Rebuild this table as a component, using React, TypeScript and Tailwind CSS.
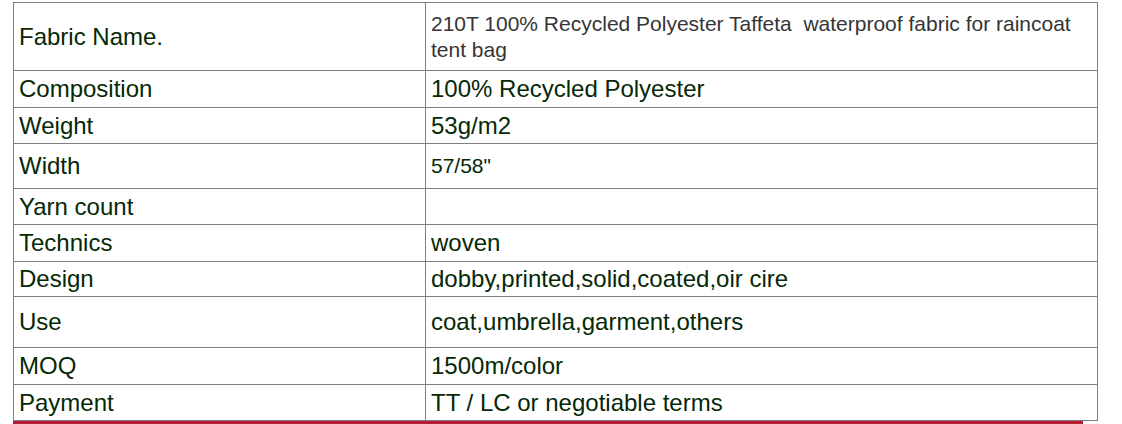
const rows: { label: string; value: React.ReactNode; h: string; small?: boolean }[] = [
  { label: "Composition", value: "100% Recycled Polyester", h: "h-[37px]" },
  { label: "Weight", value: "53g/m2", h: "h-[36px]" },
  { label: "Width", value: '57/58"', h: "h-[45px]", small: true },
  { label: "Yarn count", value: "", h: "h-[36px]" },
  { label: "Technics", value: "woven", h: "h-[37px]" },
  { label: "Design", value: "dobby,printed,solid,coated,oir cire", h: "h-[35px]" },
  { label: "Use", value: "coat,umbrella,garment,others", h: "h-[51px]" },
  { label: "MOQ", value: "1500m/color", h: "h-[37px]" },
  { label: "Payment", value: "TT / LC or negotiable terms", h: "h-[36px]" },
];

export default function App() {
  return (
    <div className="w-[1122px] h-[424px] bg-white overflow-hidden pt-[2px] pl-[13px] font-['Liberation_Sans',Arial,sans-serif] text-[#062806]">
      <table className="border-collapse w-[1085px] table-fixed">
        <colgroup>
          <col className="w-[412px]" />
          <col />
        </colgroup>
        <tbody>
          <tr className="h-[68px]">
            <td className="border border-[#808080] px-[5px] text-[24px] leading-[28px]">Fabric Name.</td>
            <td className="border border-[#808080] px-[5px] text-[21px] leading-[26px] text-[#353535]">
              210T 100% Recycled Polyester Taffeta&nbsp; waterproof fabric for raincoat
              <br />
              tent bag
            </td>
          </tr>
          {rows.map((r) => (
            <tr key={r.label} className={r.h}>
              <td className="border border-[#808080] px-[5px] text-[24px] leading-[28px]">{r.label}</td>
              <td
                className={
                  r.small
                    ? "border border-[#808080] px-[5px] text-[21px] leading-[26px]"
                    : "border border-[#808080] px-[5px] text-[24px] leading-[28px]"
                }
              >
                {r.value}
              </td>
            </tr>
          ))}
        </tbody>
      </table>
      <div className="w-[1070px] h-[3px] bg-[#b51f36]" />
    </div>
  );
}
